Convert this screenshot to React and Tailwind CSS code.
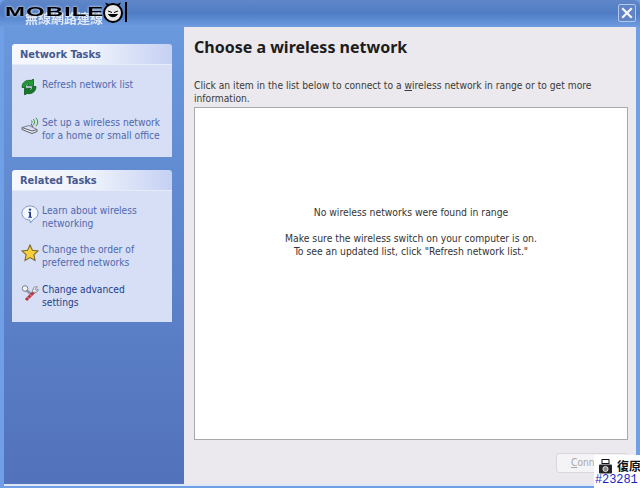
const tahoma = { fontFamily: '"DejaVu Sans Condensed", "Noto Sans", sans-serif' };

function RefreshIcon() {
  return (
    <svg width="16" height="16" viewBox="0 0 16 16" className="shrink-0">
      <path d="M1 8.5C1 3.5 5 0.5 10 1.5L12.5 0V6.8H6L8 5C5.8 4.4 4.6 5.8 4.6 8.5Z" fill="#1f9a35" stroke="#0d5a1c" strokeWidth="0.8" />
      <path d="M15 7.5C15 12.5 11 15.5 6 14.5L3.5 16V9.2H10L8 11C10.2 11.6 11.4 10.2 11.4 7.5Z" fill="#127a28" stroke="#0d5a1c" strokeWidth="0.8" />
    </svg>
  );
}

function WirelessIcon() {
  return (
    <svg width="20" height="18" viewBox="0 0 20 18" className="shrink-0">
      <path d="M1 10.5L11 14L16 12.5V14.5L11 16.5L1 12.5Z" fill="#eef0f4" stroke="#4f4f5a" strokeWidth="0.9" />
      <path d="M1 10.5L8 8.5L16 12.5" fill="none" stroke="#6a6a76" strokeWidth="0.8" />
      <path d="M10 7L12 10" stroke="#555" strokeWidth="1" />
      <path d="M10.5 3.5Q12 5 10.5 6.5M12.5 2Q15 5 12.5 8M15 0.8Q18.5 5 15 9.2" fill="none" stroke="#3f9a3a" strokeWidth="1" />
    </svg>
  );
}

function InfoIcon() {
  return (
    <svg width="18" height="19" viewBox="0 0 18 19" className="shrink-0">
      <path d="M9 1C4.6 1 1 4.2 1 8.2C1 12.2 4.6 15 9 15L9.5 18L12.5 14.4C15.2 13.2 17 11 17 8.2C17 4.2 13.4 1 9 1Z" fill="#f4f7fd" stroke="#6f8fc4" strokeWidth="0.9" />
      <circle cx="9" cy="4.6" r="1.2" fill="#1c3f94" />
      <path d="M7.4 6.8H10V11.8H11V12.8H7.2V11.8H8.2V7.8H7.4Z" fill="#1c3f94" />
    </svg>
  );
}

function StarIcon() {
  return (
    <svg width="18" height="18" viewBox="0 0 18 18" className="shrink-0">
      <path d="M9 1L11.4 6.2L17 6.9L12.9 10.7L14 16.5L9 13.6L4 16.5L5.1 10.7L1 6.9L6.6 6.2Z" fill="#f7cf3d" stroke="#7c6a2c" strokeWidth="1.1" />
    </svg>
  );
}

function ToolsIcon() {
  return (
    <svg width="18" height="18" viewBox="0 0 18 18" className="shrink-0">
      <path d="M4 5L10 10" stroke="#8f95a3" strokeWidth="2.6" />
      <circle cx="4" cy="4.5" r="2.8" fill="#f2f3f6" stroke="#7d7f88" strokeWidth="1" />
      <path d="M5 16L13 8" stroke="#b8353f" strokeWidth="3" />
      <path d="M6.5 13L8.5 15M9 10.5L11 12.5" stroke="#eec0c0" strokeWidth="0.8" />
      <path d="M11 8L12.5 4C13.5 2.6 15 2.2 16.4 3L14.2 5L15.4 6.4L17 5C17.4 7 15.8 8.8 13.6 8.8Z" fill="#dfe1e6" stroke="#6c6e77" strokeWidth="0.7" />
    </svg>
  );
}

function Task({ icon, lines, strong, className }) {
  return (
    <div className={`flex items-start ${className}`}>
      <div className="w-[30px] pl-[9px] pt-[1px] shrink-0">{icon}</div>
      <div className={`text-[10.2px] leading-[13px] ${strong ? 'text-[#23418f]' : 'text-[#5068ad]'}`}>
        {lines.map((l) => (
          <div key={l} className="whitespace-nowrap">{l}</div>
        ))}
      </div>
    </div>
  );
}

function Card({ title, className, children }) {
  return (
    <div className={`w-[160px] ${className}`}>
      <div className="h-[20px] rounded-t-[3px] bg-gradient-to-r from-[#f6f8fe] via-[#eef2fc] to-[#c5d1f3] pl-[8px] text-[11px] font-bold leading-[21px] text-[#46598f]">
        {title}
      </div>
      <div className="bg-[#d6dff6] border-t border-[#e6ebfa]">{children}</div>
    </div>
  );
}

export default function App() {
  return (
    <div className="relative h-[488px] w-[640px] overflow-hidden bg-[#6f9fe6]" style={tahoma}>
      {/* title bar */}
      <div className="flex h-[27px] items-center justify-between rounded-t-[6px] bg-gradient-to-b from-[#5f86c8] via-[#4f7dc6] to-[#6f9ce0] pl-[25px] pr-[4px]">
        <span className="pt-[8px] text-[13px] font-bold text-white/80 blur-[0.7px]" style={{ fontFamily: '"Noto Sans CJK TC", sans-serif' }}>無線網路連線</span>
        <div className="mt-[-1px] flex h-[18px] w-[18px] items-center justify-center rounded-[2px] border border-[#b6c8e8] bg-[#5f85c6]">
          <svg width="12" height="12" viewBox="0 0 12 12">
            <path d="M2 2L10 10M10 2L2 10" stroke="#f4f6fb" strokeWidth="2.2" strokeLinecap="square" />
          </svg>
        </div>
      </div>

      {/* window body */}
      <div className="flex h-[457px] pl-[4px] pr-[4px]">
        <div className="flex w-[180px] flex-col bg-gradient-to-b from-[#6a98dd] to-[#5272bb] pl-[8px] pt-[17px]">
          <Card title="Network Tasks" className="mb-[13px]">
            <div className="h-[92px]">
              <Task className="pt-[13px]" icon={<RefreshIcon />} lines={['Refresh network list']} />
              <Task className="pt-[21px]" icon={<WirelessIcon />} lines={['Set up a wireless network', 'for a home or small office']} />
            </div>
          </Card>
          <Card title="Related Tasks">
            <div className="h-[131px]">
              <Task className="pt-[13px]" icon={<InfoIcon />} lines={['Learn about wireless', 'networking']} />
              <Task className="pt-[13px]" icon={<StarIcon />} lines={['Change the order of', 'preferred networks']} />
              <Task className="pt-[14px]" icon={<ToolsIcon />} lines={['Change advanced', 'settings']} strong />
            </div>
          </Card>
        </div>

        <div className="flex flex-1 flex-col bg-[#ebe9ed] pl-[10px] pr-[8px]">
          <h1 className="pt-[9px] text-[16px] font-bold leading-[22px] text-[#1c1c1c]" style={{ fontFamily: '"Noto Sans", sans-serif' }}>Choose a wireless network</h1>
          <p className="mt-[21px] text-[10.2px] leading-[13px] text-[#3a3a3a]">
            Click an item in the list below to connect to a <span className="underline">w</span>ireless network in range or to get more
            <br />
            information.
          </p>
          <div className="mt-[2px] flex h-[333px] flex-col items-center border border-[#a9a9ad] bg-white pt-[98px] text-[10.3px] leading-[13px] text-[#333]">
            <div>No wireless networks were found in range</div>
            <div className="mt-[13px]">Make sure the wireless switch on your computer is on.</div>
            <div>To see an updated list, click "Refresh network list."</div>
          </div>
          <div className="mt-[13px] flex justify-end">
            <div className="h-[20px] w-[72px] rounded-[3px] border border-[#d8d6d8] bg-[#f4f3f5] pl-[14px] text-[10.2px] leading-[18px] text-[#a8a8a8]">
              <span className="underline">C</span>onnect
            </div>
          </div>
        </div>
      </div>
      <div className="mx-[4px] h-[2px] bg-[#dfe6f6]" />

      {/* watermark */}
      <div className="absolute left-[5px] top-[1px] flex h-[22px] items-center">
        <span className="w-[100px] origin-left scale-x-[2] text-[12px] font-bold leading-[22px] tracking-[0.5px] text-black" style={{ fontFamily: '"Liberation Sans", sans-serif', textShadow: '0 0 2px #fff' }}>MOBILE</span>
        <svg width="26" height="22" viewBox="0 0 26 22" className="ml-[-3px]">
          <circle cx="11" cy="12" r="9" fill="#e8e8e8" stroke="#000" strokeWidth="2" />
          <path d="M5 5L3 1.5L8 3.5M17 5L19 1.5L14 3.5" fill="#000" />
          <path d="M6 10L10 11.5M16 10L12 11.5M6.5 13.5Q11 18 15.5 13.5Z" fill="#000" stroke="#000" />
          <rect x="23" y="1" width="2" height="20" fill="#000" />
        </svg>
      </div>

      {/* stamp */}
      <div className="absolute bottom-0 right-0 h-[33px] w-[46px] overflow-hidden bg-white pl-[4px] pt-[3px]">
        <div className="flex h-[16px] items-center gap-[4px]">
          <svg width="15" height="15" viewBox="0 0 15 15" className="shrink-0">
            <rect x="4" y="0.5" width="7" height="4" fill="#fff" stroke="#111" />
            <rect x="1" y="5.5" width="13" height="9" rx="1" fill="#222" />
            <circle cx="7.5" cy="10" r="2.6" fill="#888" stroke="#fff" strokeWidth="0.8" />
          </svg>
          <span className="whitespace-nowrap text-[12px] font-bold leading-[14px] text-[#111]" style={{ fontFamily: '"Noto Sans CJK TC", sans-serif' }}>復原</span>
        </div>
        <div className="ml-[-4px] whitespace-nowrap pl-[1px] text-[12px] leading-[13px] tracking-[-0.1px] text-[#1b1fc4]" style={{ fontFamily: '"Liberation Mono", monospace' }}>#23281</div>
      </div>
    </div>
  );
}
